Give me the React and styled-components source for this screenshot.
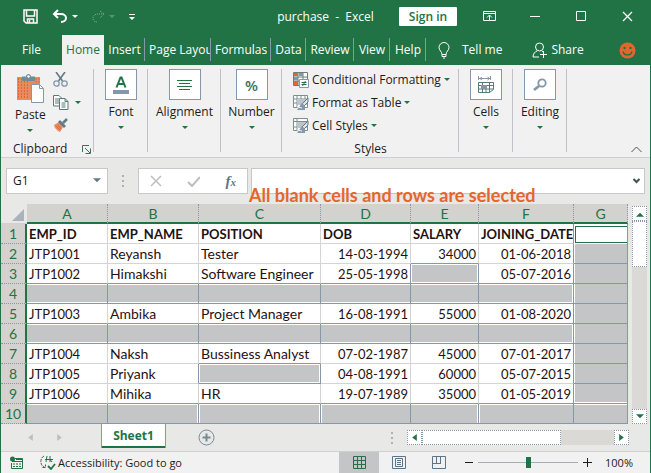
import React, { useState } from "react";
import styled, { createGlobalStyle } from "styled-components";

const green = "#217346";
const slate = "#8497ab";
const orange = "#e3662f";
const uiFont = '"Open Sans", "Noto Sans", sans-serif';
const cellFont = 'Lato, "Open Sans", sans-serif';

const GlobalStyle = createGlobalStyle`
  *, *::before, *::after { box-sizing: border-box; }
  body { margin: 0; background: #f1f1f1; }
  button, input { font: inherit; color: inherit; margin: 0; padding: 0; border: 0; background: none; }
  svg { display: block; flex: none; }
`;

const Window = styled.div`
  border: solid ${green};
  border-width: 0 1px 1px;
  font: 12px/16px ${uiFont};
  color: #1f1a1a;
  background: #f1f1f1;
  overflow: hidden;
`;

/* Title bar */
const TitleBar = styled.header`
  display: grid;
  grid-template-columns: 1fr auto 1fr;
  align-items: center;
  height: 35px;
  padding-bottom: 2px;
  background: ${green};
  color: #fff;
`;
const QuickAccess = styled.div`
  display: flex;
  align-items: center;
  padding-left: 22px;
  gap: 8px;
`;
const IconButton = styled.button`
  display: flex;
  align-items: center;
  gap: ${(p) => p.$gap || 0}px;
`;
const UndoButton = styled(IconButton)`
  gap: 4px;
  padding-left: 6px;
`;
const Title = styled.h1`
  margin: 0;
  font: 12px/16px ${uiFont};
  white-space: pre;
`;
const WindowTools = styled.div`
  display: flex;
  justify-content: flex-end;
  align-items: center;
`;
const SignIn = styled.button`
  width: 58px;
  height: 19px;
  margin-right: 9px;
  background: #fff;
  color: ${green};
  font-weight: 600;
  line-height: 17px;
  border-radius: 1px;
`;
const WindowButton = styled.button`
  width: 46px;
  height: 33px;
  display: grid;
  place-items: center;
`;

/* Ribbon tabs */
const TabBar = styled.nav`
  display: flex;
  height: 30px;
  background: ${green};
  color: #fff;
`;
const Tab = styled.button`
  width: ${(p) => p.$width}px;
  padding: 0 ${(p) => (p.$clip ? 1 : 4)}px 0 4px;
  overflow: hidden;
  white-space: nowrap;
  text-align: ${(p) => (p.$clip ? "left" : "center")};
  background: ${(p) => (p.$active ? "#f1f1f1" : "transparent")};
  color: ${(p) => (p.$active ? green : "#fff")};
  background-image: ${(p) => (p.$divided ? `linear-gradient(${slate}, ${slate})` : "none")};
  background-size: 1px 23px;
  background-position: right 3px;
  background-repeat: no-repeat;
`;
const TabText = styled.span`
  display: block;
  overflow: hidden;
`;
const TabAction = styled.button`
  display: flex;
  align-items: center;
  gap: ${(p) => p.$gap}px;
  margin-left: ${(p) => p.$before}px;
`;
const Smile = styled.button`
  margin: 0 14px 0 auto;
`;

/* Ribbon */
const Ribbon = styled.section`
  display: flex;
  height: 93px;
  padding-top: 4px;
  border-bottom: 1px solid #cfcfcf;
  background: #f1f1f1;
`;
const Group = styled.div`
  width: ${(p) => p.$width}px;
  display: flex;
  flex-direction: column;
  justify-content: space-between;
  background: linear-gradient(#bfc3c7, #bfc3c7) right top / 1px calc(100% - 5px) no-repeat;
`;
const BigButton = styled.button`
  display: flex;
  flex-direction: column;
  align-items: center;
`;
const BigIcon = styled.span`
  display: grid;
  place-items: center;
  width: 32px;
  height: 31px;
  margin-bottom: 4px;
  border: 1px solid ${slate};
  background: #fff;
`;
const ButtonText = styled.span`
  margin-bottom: 5px;
`;
const ClipboardTools = styled.div`
  display: flex;
  gap: 7px;
  padding-left: 14px;
`;
const PasteIcon = styled.span`
  margin: 4px 0 3px;
`;
const SmallTools = styled.div`
  display: flex;
  flex-direction: column;
  gap: 8px;
  padding-top: 3px;
`;
const GroupLabel = styled.div`
  display: flex;
  align-items: center;
  justify-content: ${(p) => (p.$center ? "center" : "space-between")};
  height: 16px;
  padding: ${(p) => (p.$center ? "0" : "0 3px 0 12px")};
`;
const StyleList = styled.div`
  display: flex;
  flex-direction: column;
  gap: 7px;
  padding: 3px 0 0 11px;
`;
const StyleButton = styled.button`
  display: flex;
  align-items: center;
  gap: 3px;
  white-space: nowrap;
`;
const Collapse = styled.button`
  align-self: flex-end;
  margin: 0 8px 3px auto;
`;

/* Formula bar */
const FormulaBar = styled.div`
  position: relative;
  display: flex;
  align-items: center;
  height: 46px;
  padding: 0 5px;
  background: #e8e8e7;
`;
const Box = styled.div`
  display: flex;
  align-items: center;
  height: 26px;
  border: 1px solid #c8c8c8;
  background: #fff;
`;
const NameBox = styled(Box)`
  width: 102px;
  padding: 0 6px;
`;
const NameInput = styled.input`
  flex: 1;
  min-width: 0;
`;
const Grip = styled.span`
  width: 2px;
  height: 12px;
  margin: ${(p) => p.$margin};
  background: repeating-linear-gradient(#a9b1b9 0 2px, transparent 2px 5px);
`;
const EntryTools = styled(Box)`
  width: 110px;
  justify-content: space-between;
  padding: 0 11px;
`;
const FormulaBox = styled(Box)`
  flex: 1;
  min-width: 0;
  margin-left: 3px;
  padding-right: 2px;
`;
const FormulaInput = styled.input`
  flex: 1;
  min-width: 0;
`;
const Annotation = styled.strong`
  position: absolute;
  left: 248px;
  top: 26px;
  font: 700 18px/22px ${cellFont};
  color: ${orange};
  white-space: nowrap;
`;

/* Sheet */
const SheetArea = styled.main`
  display: flex;
  background: #e8e8e7;
`;
const SheetFrame = styled.div`
  flex: 1;
  min-width: 0;
`;
const Sheet = styled.table`
  width: 100%;
  table-layout: fixed;
  border-collapse: separate;
  border-spacing: 0;
  font: 14px/18px ${cellFont};
  color: #1f1212;
`;
const Col = styled.col`
  width: ${(p) => (p.$width ? `${p.$width}px` : "auto")};
`;
const Corner = styled.th`
  height: 20px;
  padding: 4px 2px 2px 11px;
  border-bottom: 1px solid #d0d0d0;
`;
const ColumnHead = styled.th`
  height: 20px;
  padding: 0;
  background: #d3d2cf;
  color: ${green};
  font-weight: 400;
  line-height: 17px;
  border-right: 1px dotted ${slate};
  border-bottom: 2px solid ${green};
`;
const RowHead = styled.th`
  height: 20px;
  padding: 0;
  background: #d3d2cf;
  color: ${green};
  font-weight: 400;
  border-bottom: 1px dotted ${slate};
  border-right: 2px solid ${green};
`;
const side = (on, x, y) => (on ? `inset ${x}px ${y}px #fff` : "inset 0 0 #fff");
const Cell = styled.td`
  height: 20px;
  padding: 0 ${(p) => (p.$right ? 2 : 0)}px 0 2px;
  overflow: hidden;
  white-space: nowrap;
  text-align: ${(p) => (p.$right ? "right" : "left")};
  font-size: ${(p) => (p.$compact ? 13 : 14)}px;
  font-weight: ${(p) => (p.$bold ? 700 : 400)};
  background: ${(p) => (p.$on ? "#c4c5c7" : "#fff")};
  border: 0 solid;
  border-width: 0 1px 1px 0;
  border-color: #d4d4d4 ${(p) => (p.$slateRight ? slate : "#d4d4d4")} ${(p) => (p.$slateBottom ? slate : "#d4d4d4")};
  box-shadow: ${(p) =>
    p.$on
      ? [side(p.$l, 1, 0), side(p.$r, -1, 0), side(p.$t, 0, 1), side(p.$b, 0, -1)].join(",")
      : "none"};
`;
const ActiveCell = styled.td`
  height: 20px;
  padding: 1px 0 1px 1px;
  background: #fff;
  border-right: 1px solid ${slate};
`;
const ActiveOutline = styled.div`
  height: 17px;
  border: 1px solid ${green};
  border-right: 0;
`;
const VScroll = styled.div`
  display: flex;
  flex-direction: column;
  width: 15px;
  margin: 2px 3px 0 4px;
  background: #dad9d6;
`;
const ScrollButton = styled.button`
  display: grid;
  place-items: center;
  width: 15px;
  height: 15px;
  border: 1px dotted ${slate};
  background: #fff;
`;
const VThumb = styled.div`
  height: 46px;
  margin-bottom: auto;
  border: 1px dotted ${slate};
  background: #fff;
`;

/* Sheet tabs */
const SheetTabs = styled.div`
  display: flex;
  height: 28px;
  background: #e8e8e7;
  border-bottom: 1px solid #cfcfcf;
`;
const SheetNav = styled.div`
  display: flex;
  align-items: center;
  gap: 22px;
  width: 100px;
  padding-left: 26px;
`;
const SheetTab = styled.button`
  width: 65px;
  height: 24px;
  background: #fff;
  border: solid ${slate};
  border-width: 0 1px;
  box-shadow: inset 0 -2px ${green};
  color: ${green};
  font: 700 12px/22px ${uiFont};
`;
const AddSheet = styled.button`
  margin-left: 32px;
`;
const HScroll = styled.div`
  display: flex;
  align-self: center;
  width: 222px;
  margin-right: 21px;
  background: #dad9d6;
`;
const HThumb = styled.div`
  width: 139px;
  margin-right: auto;
  border: 1px dotted ${slate};
  background: #fff;
`;

/* Status bar */
const StatusBar = styled.footer`
  display: flex;
  align-items: center;
  height: 21px;
  padding-left: 8px;
  background: #f1f1f1;
  font-size: 11px;
`;
const Accessibility = styled.button`
  display: flex;
  align-items: center;
  gap: 2px;
  margin: 0 auto 0 17px;
  white-space: nowrap;
`;
const ViewButton = styled.button`
  display: grid;
  place-items: center;
  width: 40px;
  height: 21px;
  background: ${(p) => (p.$active ? "#c4c5c7" : "transparent")};
`;
const ZoomButton = styled.button`
  width: 19px;
  display: grid;
  place-items: center;
`;
const Slider = styled.input`
  appearance: none;
  width: 100px;
  height: 12px;
  background: linear-gradient(#a3abb3, #a3abb3) center / 100% 1px no-repeat;
  &::-webkit-slider-thumb {
    appearance: none;
    width: 5px;
    height: 11px;
    background: ${green};
  }
`;
const ZoomLevel = styled.output`
  width: 53px;
  padding-left: 8px;
`;

const Arrow = ({ dir = "down", color = green, size = 6 }) => {
  const d = { down: "M0 1h6L3 4z", up: "M0 5h6L3 2z", left: "M5 0v6L1 3z", right: "M1 0v6l4-3z" }[dir];
  return (
    <svg width={size} height={size} viewBox="0 0 6 6"><path d={d} fill={color} /></svg>
  );
};

const SaveIcon = () => (
  <svg width="15" height="15" viewBox="0 0 15 15" fill="none" stroke="#fff" strokeWidth="1.5">
    <path d="M1 1h13v13H3l-2-2zM3.5 1v6h8V1M4.5 14v-4h6v4" /><path d="M6.5 11v3" />
  </svg>
);
const UndoIcon = () => (
  <svg width="16" height="15" viewBox="0 0 16 15" fill="none" stroke="#fff" strokeWidth="2">
    <path d="M6 1L2 5l4 4M2 5h7c3 0 5 2 5 4s-2 4-5 4" />
  </svg>
);
const RedoIcon = () => (
  <svg width="13" height="13" viewBox="0 0 13 13" fill="none" stroke="#86a99a" strokeDasharray="1 1">
    <path d="M8 1l4 3-4 4M12 4H6C3 4 1 6 1 8s1 4 4 4" />
  </svg>
);
const CustomizeIcon = () => (
  <svg width="6" height="8" viewBox="0 0 6 8" fill="#fff"><path d="M0 1h6v1H0zM0 4h6L3 7z" /></svg>
);
const DisplayIcon = () => (
  <svg width="13" height="11" viewBox="0 0 13 11" fill="none" stroke="#fff">
    <path d="M.5.5h12v9H.5zM.5 2.5h12M6.5 9V4M4 6.5L6.5 4 9 6.5" />
  </svg>
);
const MinIcon = () => <svg width="11" height="11"><path d="M0 5.5h10" stroke="#fff" /></svg>;
const MaxIcon = () => <svg width="11" height="11"><path d="M.5.5h9v9h-9z" stroke="#fff" fill="none" /></svg>;
const CloseIcon = () => <svg width="11" height="11"><path d="M1 1l9 9M10 1l-9 9" stroke="#fff" strokeWidth="1.3" /></svg>;
const BulbIcon = () => (
  <svg width="12" height="17" viewBox="0 0 12 17" fill="none" stroke="#fff">
    <path d="M4 12.5C4 9.500 1 8.500 1 5.500a5 5 0 0 1 10 0C11 8.500 8 9.500 8 12.500zM4 12.500v2h4v-2M5 16h2" />
  </svg>
);
const ShareIcon = () => (
  <svg width="16" height="17" viewBox="0 0 16 17" fill="none" stroke="#fff">
    <circle cx="7.500" cy="5" r="4" /><path d="M1 15c0-3 2-5.500 4-6M10 9l1 1M1 15h6M8 12.500h7M11.500 9v7" />
  </svg>
);
const SmileIcon = () => (
  <svg width="17" height="17" viewBox="0 0 17 17">
    <circle cx="8.500" cy="8.500" r="8" fill={orange} />
    <circle cx="5.500" cy="6" r="1.200" fill={green} /><circle cx="11.500" cy="6" r="1.200" fill={green} />
    <path d="M4 9.500c1 4.500 8 4.500 9 0" fill="none" stroke={green} strokeWidth="1.300" />
  </svg>
);
const ClipboardIcon = () => (
  <svg width="29" height="31" viewBox="0 0 29 31">
    <path d="M1 4h23v7h-8v16H1z" fill="#e78b62" />
    <path d="M2.500 5v21M5.500 5v21M8.500 8v18M11.500 8v18M20 5v5M23 5v5" stroke={orange} strokeDasharray="2 1" />
    <path d="M6 3.500h4C10 0 15 0 15 3.500h4V8H6z" fill="#748a99" /><circle cx="12.500" cy="3.500" r="1.200" fill="#fff" />
    <path d="M15.500 11.500h8l4 4v14h-12z" fill="#fff" stroke={slate} /><path d="M23.500 11.500v4h4" fill="none" stroke={slate} />
  </svg>
);
const CutIcon = () => (
  <svg width="15" height="15" viewBox="0 0 15 15" fill="none" stroke={slate}>
    <path d="M3 0l6.500 9M12 0L5.500 9" stroke="#617b86" strokeWidth="1.600" />
    <circle cx="3.500" cy="11.500" r="2.700" strokeWidth="1.300" /><circle cx="11.500" cy="11.500" r="2.700" strokeWidth="1.300" />
  </svg>
);
const CopyIcon = () => (
  <svg width="16" height="15" viewBox="0 0 16 15" fill="#fff" stroke="#557d74">
    <path d="M.5.5H6L8.500 3v8h-8zM2 4h4M2 6h4M2 8h4" />
    <path d="M6.500 3.500H12l3 3v8H6.500zM12 3.500v3h3M8.500 8h4M8.500 10h4M8.500 12h4" />
  </svg>
);
const PainterIcon = () => (
  <svg width="16" height="14" viewBox="0 0 16 14">
    <path d="M1 7l5-3 4 5-3 5-2-1-1-1-1-1-1-1z" fill="#e78b62" /><path d="M3 8l4 4M5 7l3 4" stroke={orange} />
    <path d="M5 4l2-2 6 6-2 2z" fill="#617b86" /><path d="M10 5l4-4" stroke="#617b86" strokeWidth="2.500" />
  </svg>
);
const LauncherIcon = () => (
  <svg width="9" height="9" viewBox="0 0 9 9" fill="none" stroke="#446b5c">
    <path d="M.5 7V.5H7M3 3l5 5M8.500 3.500v5h-5" />
  </svg>
);
const FontIcon = () => (
  <svg width="18" height="20" viewBox="0 0 18 20">
    <path d="M4.500 12.500L8.500 2.500h1l4 10M6 9h6" stroke={green} strokeWidth="2" fill="none" />
    <path d="M1 15h16v4H1z" fill={slate} />
  </svg>
);
const AlignIcon = () => (
  <svg width="15" height="12" viewBox="0 0 15 12" stroke={green}><path d="M0 1.500h15M2 4.500h11M0 7.500h15M2 10.500h11" /></svg>
);
const Percent = styled.span`
  font: 600 15px/20px ${uiFont};
  color: #39735a;
`;
const CellsIcon = () => (
  <svg width="16" height="17" viewBox="0 0 16 17" fill="none" stroke={slate}>
    <path d="M.5 0v4M12.500 0v4M1 2.500h11M4 1L2 2.500 4 4M9.500 1l2 1.500-2 1.500" />
    <path d="M.5 6.500h15v7l-4 3H.5zM.5 9.500h15M.5 13h15M4.500 6.500v10M11.500 6.500v10M8 13v3" stroke="#557d74" />
    <path d="M3 9h6v4H3z" fill={slate} stroke="none" />
  </svg>
);
const FindIcon = () => (
  <svg width="14" height="14" viewBox="0 0 14 14" fill="none" stroke={slate}>
    <circle cx="9" cy="5" r="3.700" strokeWidth="1.800" /><path d="M6 8l-5 4" strokeWidth="2.800" />
  </svg>
);
const ConditionalIcon = () => (
  <svg width="16" height="16" viewBox="0 0 16 16">
    <path d="M.5.5h14v13H.5zM.5 5h14M.5 9h14M5 0v14M10 0v14" fill="#fff" stroke="#66817a" />
    <path d="M1 1h4v3H1zM1 9h4v4H1z" fill={orange} /><path d="M6 1h4v3H6zM1 5h4v3H1z" fill={slate} />
    <path d="M6.500 7.500h9v8h-9z" fill="#fff" stroke={slate} /><path d="M8.500 10.500h5M8.500 12.500h5M12.500 9l-3 5" stroke={green} />
  </svg>
);
const TableStyleIcon = ({ merged }) => (
  <svg width="16" height="16" viewBox="0 0 16 16">
    <path d={merged ? "M.5.5h14v12H.5zM.5 3.500h14M4 0v13M.5 9h4" : "M.5.5h14v12H.5zM.5 4h14M.5 8h14M4 0v13M8 0v13M12 0v8"} fill="#fff" stroke="#7c918c" />
    <path d="M4 4h10v6H4z" fill="#bcc3ca" />
    <path d="M15 3v4l-4 4-2-2z" fill="#dfe3e6" stroke="#617b86" /><path d="M9 8l3 3v4H4z" fill={slate} /><path d="M4 12l5 1" stroke="#f1f1f1" />
  </svg>
);
const ChevronIcon = ({ up }) => (
  <svg width="11" height="8" viewBox="0 0 11 8" fill="none" stroke="#41554c" strokeWidth={up ? 1 : 2}>
    <path d={up ? "M.5 6l5-5 5 5" : "M2.500 2l3 3 3-3"} />
  </svg>
);
const CancelIcon = () => <svg width="12" height="12"><path d="M1 1l10 10M11 1L1 11" stroke="#bcbfc1" strokeWidth="1.500" /></svg>;
const EnterIcon = () => <svg width="13" height="11" fill="none"><path d="M1 6l4 4 8-9" stroke="#bcbfc1" strokeWidth="2" /></svg>;
const Fx = styled.i`
  font: italic 700 15px/18px "Liberation Serif", serif;
  color: #5f7585;
`;
const FxSmall = styled.small`
  font-size: 11px;
`;
const CornerIcon = () => <svg width="12" height="12"><path d="M12 0v12H0z" fill="#a9b3bd" /></svg>;
const AddIcon = () => (
  <svg width="17" height="17" viewBox="0 0 17 17" fill="none" stroke="#748a99">
    <circle cx="8.500" cy="8.500" r="7.500" /><path d="M8.500 4.500v8M4.500 8.500h8" strokeWidth="2" />
  </svg>
);
const MacroIcon = () => (
  <svg width="14" height="14" viewBox="0 0 14 14" fill="none" stroke={green}>
    <path d="M6 2.500h7.500v10h-11V7M3 5.500h10" /><path d="M4 8h8M4 10.500h8" strokeDasharray="2 1" /><path d="M7 3h6" strokeWidth="2" />
    <circle cx="3.500" cy="3" r="2.500" fill={green} stroke="none" />
  </svg>
);
const AccessIcon = () => (
  <svg width="16" height="15" viewBox="0 0 16 15" fill="none" stroke={green}>
    <path d="M4 1C0 3 0 9 3 11.500l2 1M2.500 12.500h3v-3" strokeDasharray="3 1" /><path d="M5 4.500h8M6 7l1-6M10 1v6M10 4.500l2 2.500" />
    <path d="M8 11l3 3 4-5" strokeWidth="1.800" />
  </svg>
);
const NormalIcon = () => (
  <svg width="13" height="13" viewBox="0 0 13 13" fill="none" stroke={green}><path d="M.5.5h12v12H.5zM4.500 0v13M8.500 0v13M0 4.500h13M0 8.500h13" /></svg>
);
const PageIcon = () => (
  <svg width="14" height="13" viewBox="0 0 14 13" fill="none" stroke="#5f7585"><path d="M.5.5h13v12H.5zM3.500 2.500h7v8h-7zM5 4.500h4M5 6.500h4M5 8.500h4" /></svg>
);
const BreakIcon = () => (
  <svg width="14" height="13" viewBox="0 0 14 13" fill="none" stroke="#5f7585"><path d="M.5.5h13v12H.5zM4.500 0v7.500M8.500 0v7.500M0 7.500h9" /></svg>
);
const Sign = ({ plus }) => (
  <svg width="9" height="9"><path d={plus ? "M0 4.500h9M4.500 0v9" : "M1 4.500h8"} stroke="#1f1a1a" /></svg>
);

const tabs = [
  ["File", 61], ["Home", 42], ["Insert", 41], ["Page Layout", 66], ["Formulas", 60],
  ["Data", 35], ["Review", 48], ["View", 36], ["Help", 36],
];
const columns = ["A", "B", "C", "D", "E", "F", "G"];
const columnWidths = [81, 91, 122, 90, 68, 95, null];
const rows = [
  ["EMP_ID", "EMP_NAME", "POSITION", "DOB", "SALARY", "JOINING_DATE"],
  ["JTP1001", "Reyansh", "Tester", "14-03-1994", "34000", "01-06-2018"],
  ["JTP1002", "Himakshi", "Software Engineer", "25-05-1998", "", "05-07-2016"],
  [],
  ["JTP1003", "Ambika", "Project Manager", "16-08-1991", "55000", "01-08-2020"],
  [],
  ["JTP1004", "Naksh", "Bussiness Analyst", "07-02-1987", "45000", "07-01-2017"],
  ["JTP1005", "Priyank", "", "04-08-1991", "60000", "05-07-2015"],
  ["JTP1006", "Mihika", "HR", "19-07-1989", "35000", "01-05-2019"],
  [],
];
/* One letter per selected range; a dot is an unselected cell. */
const ranges = [
  "......G", "......G", "....E.G", "RRRRRRG", "......G",
  "SSSSSSG", "......G", "..T...G", "......G", "UUVWWXX",
];
const rangeAt = (r, c) => (ranges[r] && ranges[r][c]) || null;
const selected = (r, c) => {
  const v = rangeAt(r, c);
  return v !== null && v !== ".";
};

const SheetCell = ({ r, c, text }) => {
  const own = rangeAt(r, c);
  const differs = (v) => v !== null && v !== own;
  return (
    <Cell
      $on={selected(r, c)}
      $right={r > 0 && c > 2}
      $bold={r === 0}
      $compact={r === 0 || c === 0 || c > 2}
      $slateRight={selected(r, c) || selected(r, c + 1)}
      $slateBottom={selected(r, c) || selected(r + 1, c)}
      $l={differs(rangeAt(r, c - 1))}
      $r={differs(rangeAt(r, c + 1))}
      $t={differs(rangeAt(r - 1, c))}
      $b={differs(rangeAt(r + 1, c))}
    >
      {text}
    </Cell>
  );
};

const RibbonGroup = ({ name, width, icon }) => (
  <Group $width={width}>
    <BigButton>
      <BigIcon>{icon}</BigIcon>
      <ButtonText>{name}</ButtonText>
      <Arrow />
    </BigButton>
  </Group>
);

export default function App() {
  const [zoom, setZoom] = useState(50);
  return (
    <Window>
      <GlobalStyle />
      <TitleBar>
        <QuickAccess>
          <IconButton aria-label="Save"><SaveIcon /></IconButton>
          <UndoButton aria-label="Undo"><UndoIcon /><Arrow color="#fff" /></UndoButton>
          <UndoButton aria-label="Redo"><RedoIcon /><Arrow color="#5a9378" /></UndoButton>
          <UndoButton aria-label="Customize Quick Access Toolbar"><CustomizeIcon /></UndoButton>
        </QuickAccess>
        <Title>{"purchase  -  Excel"}</Title>
        <WindowTools>
          <SignIn>Sign in</SignIn>
          <WindowButton aria-label="Ribbon Display Options"><DisplayIcon /></WindowButton>
          <WindowButton aria-label="Minimize"><MinIcon /></WindowButton>
          <WindowButton aria-label="Maximize"><MaxIcon /></WindowButton>
          <WindowButton aria-label="Close"><CloseIcon /></WindowButton>
        </WindowTools>
      </TitleBar>

      <TabBar>
        {tabs.map(([name, width], i) => (
          <Tab key={name} $width={width} $active={i === 1} $divided={i > 1} $clip={name === "Page Layout"}>
            <TabText>{name}</TabText>
          </Tab>
        ))}
        <TabAction $gap={12} $before={12}><BulbIcon />Tell me</TabAction>
        <TabAction $gap={3} $before={30}><ShareIcon />Share</TabAction>
        <Smile aria-label="Feedback"><SmileIcon /></Smile>
      </TabBar>

      <Ribbon>
        <Group $width={93}>
          <ClipboardTools>
            <BigButton>
              <PasteIcon><ClipboardIcon /></PasteIcon>
              <ButtonText>Paste</ButtonText>
              <Arrow />
            </BigButton>
            <SmallTools>
              <IconButton aria-label="Cut"><CutIcon /></IconButton>
              <IconButton aria-label="Copy" $gap={6}><CopyIcon /><Arrow /></IconButton>
              <IconButton aria-label="Format Painter"><PainterIcon /></IconButton>
            </SmallTools>
          </ClipboardTools>
          <GroupLabel>Clipboard<IconButton aria-label="Clipboard options"><LauncherIcon /></IconButton></GroupLabel>
        </Group>
        <RibbonGroup name="Font" width={54} icon={<FontIcon />} />
        <RibbonGroup name="Alignment" width={73} icon={<AlignIcon />} />
        <RibbonGroup name="Number" width={61} icon={<Percent>%</Percent>} />
        <Group $width={177}>
          <StyleList>
            <StyleButton><ConditionalIcon />Conditional Formatting<Arrow /></StyleButton>
            <StyleButton><TableStyleIcon />Format as Table<Arrow /></StyleButton>
            <StyleButton><TableStyleIcon merged />Cell Styles<Arrow /></StyleButton>
          </StyleList>
          <GroupLabel $center>Styles</GroupLabel>
        </Group>
        <RibbonGroup name="Cells" width={54} icon={<CellsIcon />} />
        <RibbonGroup name="Editing" width={54} icon={<FindIcon />} />
        <Collapse aria-label="Collapse the Ribbon"><ChevronIcon up /></Collapse>
      </Ribbon>

      <FormulaBar>
        <NameBox>
          <NameInput aria-label="Name Box" defaultValue="G1" />
          <IconButton aria-label="Show names"><Arrow color="#617b86" size={8} /></IconButton>
        </NameBox>
        <Grip $margin="0 14px" />
        <EntryTools>
          <IconButton aria-label="Cancel"><CancelIcon /></IconButton>
          <IconButton aria-label="Enter"><EnterIcon /></IconButton>
          <IconButton aria-label="Insert Function"><Fx>f<FxSmall>x</FxSmall></Fx></IconButton>
        </EntryTools>
        <FormulaBox>
          <FormulaInput aria-label="Formula" />
          <IconButton aria-label="Expand Formula Bar"><ChevronIcon /></IconButton>
        </FormulaBox>
        <Annotation>All blank cells and rows are selected</Annotation>
      </FormulaBar>

      <SheetArea>
        <SheetFrame>
          <Sheet>
            <colgroup>
              <Col $width={26} />
              {columnWidths.map((w, i) => <Col key={columns[i]} $width={w} />)}
            </colgroup>
            <thead>
              <tr>
                <Corner aria-label="Select all"><CornerIcon /></Corner>
                {columns.map((name) => <ColumnHead key={name} scope="col">{name}</ColumnHead>)}
              </tr>
            </thead>
            <tbody>
              {rows.map((row, r) => (
                <tr key={r}>
                  <RowHead scope="row">{r + 1}</RowHead>
                  {columns.map((name, c) =>
                    r === 0 && c === 6 ? (
                      <ActiveCell key={name}><ActiveOutline /></ActiveCell>
                    ) : (
                      <SheetCell key={name} r={r} c={c} text={row[c]} />
                    )
                  )}
                </tr>
              ))}
            </tbody>
          </Sheet>
        </SheetFrame>
        <VScroll>
          <ScrollButton aria-label="Scroll up"><Arrow dir="up" size={8} /></ScrollButton>
          <VThumb />
          <ScrollButton aria-label="Scroll down"><Arrow size={8} /></ScrollButton>
        </VScroll>
      </SheetArea>

      <SheetTabs>
        <SheetNav>
          <IconButton aria-label="Previous sheet"><Arrow dir="left" color="#bcbfc1" size={7} /></IconButton>
          <IconButton aria-label="Next sheet"><Arrow dir="right" color="#bcbfc1" size={7} /></IconButton>
        </SheetNav>
        <SheetTab>Sheet1</SheetTab>
        <AddSheet aria-label="New sheet"><AddIcon /></AddSheet>
        <Grip $margin="8px 14px auto auto" />
        <HScroll>
          <ScrollButton aria-label="Scroll left"><Arrow dir="left" size={7} /></ScrollButton>
          <HThumb />
          <ScrollButton aria-label="Scroll right"><Arrow dir="right" size={7} /></ScrollButton>
        </HScroll>
      </SheetTabs>

      <StatusBar>
        <IconButton aria-label="Record Macro"><MacroIcon /></IconButton>
        <Accessibility><AccessIcon />Accessibility: Good to go</Accessibility>
        <ViewButton $active aria-label="Normal"><NormalIcon /></ViewButton>
        <ViewButton aria-label="Page Layout"><PageIcon /></ViewButton>
        <ViewButton aria-label="Page Break Preview"><BreakIcon /></ViewButton>
        <ZoomButton aria-label="Zoom out" onClick={() => setZoom(Math.max(0, zoom - 5))}><Sign /></ZoomButton>
        <Slider type="range" aria-label="Zoom" min="0" max="100" value={zoom} onChange={(e) => setZoom(+e.target.value)} />
        <ZoomButton aria-label="Zoom in" onClick={() => setZoom(Math.min(100, zoom + 5))}><Sign plus /></ZoomButton>
        <ZoomLevel>{zoom * 2}%</ZoomLevel>
      </StatusBar>
    </Window>
  );
}
